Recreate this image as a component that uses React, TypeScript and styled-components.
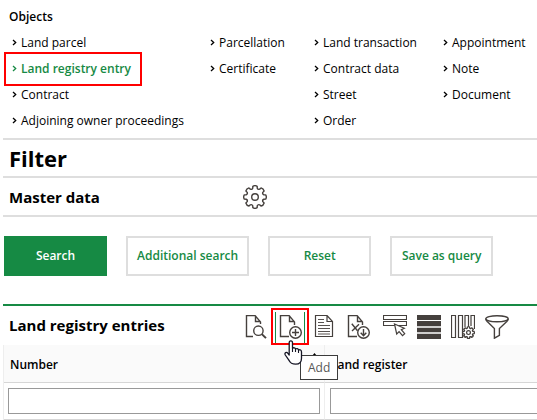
import React from "react";
import styled, { createGlobalStyle, css } from "styled-components";

const GREEN = "#168a44";
const LINE = "#dedede";
const INK = "#45403d";

const GlobalStyle = createGlobalStyle`
  *, *::before, *::after { box-sizing: border-box; }
  body {
    margin: 0;
    background: #fff;
    color: #000;
    font: 12px/26px "Open Sans", "Noto Sans", sans-serif;
    overflow: hidden;
  }
`;

const Page = styled.main`
  padding-left: 3px;
`;

const callout = css`
  position: relative;
  &::after {
    content: "";
    position: absolute;
    border: 2px solid #f00;
    pointer-events: none;
  }
`;

const Objects = styled.nav`
  padding: 4px 0 4px 6px;
  border-bottom: 2px solid ${LINE};
`;

const ObjectsTitle = styled.h2`
  margin: 0;
  font-size: 12px;
  font-weight: 600;
`;

const LinkColumns = styled.div`
  display: grid;
  grid-template-columns: 198px 104px 129px 1fr;
  padding-left: 3px;
`;

const LinkList = styled.ul`
  margin: 0;
  padding: 0;
  list-style: none;
`;

const ObjectLink = styled.a<{ $current?: boolean }>`
  display: inline-flex;
  align-items: center;
  gap: 4px;
  height: 26px;
  vertical-align: top;
  color: #000;
  white-space: nowrap;
  text-decoration: none;
  ${(p) =>
    p.$current &&
    css`
      ${callout}
      color: ${GREEN};
      font-weight: 600;
      &::after { inset: -4px -11px -4px -8px; }
    `}
`;

const FilterTitle = styled.h1`
  margin: 0;
  padding-left: 6px;
  border-bottom: 2px solid ${LINE};
  font-size: 22px;
  line-height: 36px;
`;

const SectionTitle = styled.h2`
  flex: 0 0 234px;
  margin: 0;
  font-size: 15px;
  line-height: 24px;
  white-space: nowrap;
`;

const MasterBar = styled.section`
  display: flex;
  align-items: center;
  height: 39px;
  padding: 0 0 0 6px;
  border-bottom: 2px solid ${LINE};
`;

const IconButton = styled.button<{ $active?: boolean }>`
  display: flex;
  width: 24px;
  height: 24px;
  padding: 0;
  border: 0;
  background: none;
  ${(p) =>
    p.$active &&
    css`
      ${callout}
      &::before {
        content: "";
        position: absolute;
        inset: -3px -2px -4px -4px;
        border: solid ${GREEN};
        border-width: 0 1px;
      }
      &::after { inset: -7px -6px -6px -8px; }
    `}
`;

const Actions = styled.div`
  display: flex;
  gap: 19px;
  padding: 19px 0 28px 1px;
`;

const ActionButton = styled.button<{ $primary?: boolean }>`
  min-width: 103px;
  height: 40px;
  padding: 0 9px;
  border: 2px solid ${(p) => (p.$primary ? GREEN : LINE)};
  background: ${(p) => (p.$primary ? GREEN : "#fff")};
  color: ${(p) => (p.$primary ? "#fff" : GREEN)};
  font: inherit;
  font-weight: 600;
  white-space: nowrap;
`;

const EntriesBar = styled.header`
  display: flex;
  align-items: center;
  height: 41px;
  padding: 0 0 2px 6px;
  border-top: 2px solid ${GREEN};
`;

const Tools = styled.div`
  display: flex;
  padding: 4px 0 0 2px;
`;

const ToolGroup = styled.div`
  display: flex;
  gap: 10px;
  & + & { margin-left: 12px; }
`;

const TableScroller = styled.div`
  overflow: hidden;
`;

const EntryTable = styled.table`
  width: 120%;
  table-layout: fixed;
  border-spacing: 0;
  border-left: 1px solid #eee;

  th, td {
    padding: 0 4px;
    border-right: 1px solid #eee;
    border-bottom: 1px solid #d6d6d6;
  }
  th {
    height: 38px;
    background: #fafafa;
    font-weight: 600;
    text-align: left;
  }
  td { height: 37px; }
  td + td { padding-left: 5px; }
  th:first-child { width: 321px; }
`;

const HeadLabel = styled.div`
  display: flex;
  justify-content: space-between;
  align-items: center;
  padding: 2px 3px 0 2px;
`;

const FilterInput = styled.input`
  display: block;
  width: 100%;
  height: 26px;
  border: 1px solid #999;
  background: #fff;
  font: inherit;
`;

const HoverLayer = styled.div`
  position: absolute;
  top: 25px;
  left: 5px;
  z-index: 1;
  width: 19px;
  height: 25px;
`;

const Tooltip = styled.span`
  position: absolute;
  top: 15px;
  left: 16px;
  padding: 0 7px;
  border: 1px solid #3c3c3c;
  background: #fff;
  color: #575757;
  font: 12px/23px "Open Sans", sans-serif;
`;

const Svg = ({ children, size = 24 }: { children: React.ReactNode; size?: number }) => (
  <svg width={size} height={size} viewBox="0 0 24 24" fill="none" stroke={INK} strokeWidth="1.4" aria-hidden="true">
    {children}
  </svg>
);

const Chevron = () => (
  <svg width="5" height="8" viewBox="0 0 5 8" fill="none" stroke="currentColor" strokeWidth="1.3" aria-hidden="true">
    <path d="M1 1l2.7 2.5L1 6" />
  </svg>
);

const gearPath = (cx: number, cy: number, r: number) => {
  const n = 8;
  const pt = (rad: number, a: number) =>
    `${(cx + rad * Math.cos(a)).toFixed(2)} ${(cy + rad * Math.sin(a)).toFixed(2)}`;
  let d = "";
  for (let i = 0; i < n; i++) {
    const a = (i * 2 * Math.PI) / n - Math.PI / 2;
    d += `${i ? "L" : "M"}${pt(r * 0.79, a - 0.25)}L${pt(r * 0.95, a - 0.2)}Q${pt(r * 1.04, a)} ${pt(r * 0.95, a + 0.2)}L${pt(r * 0.79, a + 0.25)}`;
    d += `Q${pt(r * 0.67, a + Math.PI / n)} ${pt(r * 0.79, a + (2 * Math.PI) / n - 0.25)}`;
  }
  return d + "Z";
};

const GearIcon = () => (
  <Svg>
    <path d={gearPath(12, 12, 11.5)} strokeLinejoin="round" />
    <circle cx="12" cy="12" r="3.3" />
  </Svg>
);

const SearchDocIcon = () => (
  <Svg>
    <path d="M8 21.5H1.5v-21H10l5.5 6.4v2M10.5.5v6h5" />
    <circle cx="13.4" cy="15.7" r="4.7" />
    <path d="M16.8 19.1l4.2 4" strokeWidth="2" />
  </Svg>
);

const AddDocIcon = () => (
  <Svg>
    <path d="M10 21.5H1.5v-21H10l5.5 6.4v3M10.5.5v6h5" />
    <circle cx="16.5" cy="17.5" r="5.8" />
    <path d="M16.5 14v7M13 17.5h7" />
  </Svg>
);

const TextDocIcon = () => (
  <Svg>
    <path d="M2.5.5H14l5.5 6v15h-17zM14 .5v6h5.5" strokeWidth="1.2" />
    <path d="M5 4.5h6M5 7.5h6M5 10.5h12M5 13.5h12M5 16.5h12M5 19h12" strokeWidth=".9" />
  </Svg>
);

const ExportIcon = () => (
  <Svg>
    <path d="M10 21.5H1.5v-21H10l5.5 6.4v3M10.5.5v6h5" />
    <path d="M4.8 8.7l5.7 7M12 9.3L5 16" />
    <circle cx="16.5" cy="17.5" r="5.8" />
    <path d="M16.5 14v6.5M13.7 17.7l2.8 3 2.8-3" />
  </Svg>
);

const SelectRowsIcon = () => (
  <Svg>
    <path d="M.5.5h23v4H.5zM.5 6.5h23v4H.5z" strokeWidth="1.1" />
    <path d="M11.5 9l2.2 10 2.4-2.4 3.4 4 2.2-2-3.4-3.9 3-1.5z" fill="#fff" strokeWidth="1.2" />
  </Svg>
);

const RowsIcon = () => (
  <Svg>
    <path d="M0 0h24v5H0zM0 6h24v5.3H0zM0 12.7h24v4.6H0zM0 18.7h24V24H0z" fill={INK} stroke="none" />
  </Svg>
);

const ColumnsIcon = () => (
  <Svg>
    <path d="M.5.5h4v22h-4zM7.5.5h4v22h-4zM14 12V.5h3.5V11M20 11V.5h3.5V14" strokeWidth="1.2" />
    <path d={gearPath(17.5, 17.6, 6)} fill="#fff" strokeWidth="1.3" />
    <circle cx="17.5" cy="17.6" r="1.9" strokeWidth="1.2" />
  </Svg>
);

const FunnelIcon = () => (
  <Svg>
    <ellipse cx="12" cy="3.8" rx="11.2" ry="3" />
    <path d="M.8 3.8c0 1.8 1 2.3 2.2 3.5l6.4 6.3v9.6l5-2.8v-6.8L21 7.3c1.2-1.2 2.2-1.7 2.2-3.5" />
  </Svg>
);

const HandCursor = () => (
  <svg width="19" height="25" viewBox="0 0 19 25" fill="#fff" stroke="#161625" strokeWidth="1.3" strokeLinejoin="round" aria-hidden="true">
    <path d="M5.2 15V2.8c0-2.6 3.3-2.6 3.3 0v5.5c1-1 2.8-.6 3 .7 1.2-.8 2.8-.3 3 1 1.5-.7 3 .2 3 2v6.2c0 3.6-2.2 5.9-5.8 5.9-4 0-5.3-1-7-4.2L1.3 15c-1.2-2.4 1.3-3.3 2.6-1.7z" />
    <path d="M8.5 8v4M11.5 9v3M14.5 10v3" strokeWidth="1.1" />
  </svg>
);

const SortIcon = () => (
  <svg width="5" height="26" viewBox="0 0 5 26" aria-hidden="true">
    <path d="M2.5 1L5 4H0z" />
  </svg>
);

const columns = [
  ["Land parcel", "Land registry entry", "Contract", "Adjoining owner proceedings"],
  ["Parcellation", "Certificate"],
  ["Land transaction", "Contract data", "Street", "Order"],
  ["Appointment", "Note", "Document"],
];

export default function App() {
  return (
    <>
      <GlobalStyle />
      <Page>
        <Objects aria-label="Objects">
          <ObjectsTitle>Objects</ObjectsTitle>
          <LinkColumns>
            {columns.map((items) => (
              <LinkList key={items[0]}>
                {items.map((item) => (
                  <li key={item}>
                    <ObjectLink href="#" $current={item === "Land registry entry"}>
                      <Chevron />
                      {item}
                    </ObjectLink>
                  </li>
                ))}
              </LinkList>
            ))}
          </LinkColumns>
        </Objects>
        <FilterTitle>Filter</FilterTitle>
        <MasterBar>
          <SectionTitle>Master data</SectionTitle>
          <IconButton aria-label="Settings"><GearIcon /></IconButton>
        </MasterBar>
        <Actions>
          <ActionButton $primary>Search</ActionButton>
          <ActionButton>Additional search</ActionButton>
          <ActionButton>Reset</ActionButton>
          <ActionButton>Save as query</ActionButton>
        </Actions>
        <EntriesBar>
          <SectionTitle>Land registry entries</SectionTitle>
          <Tools role="toolbar">
            <ToolGroup>
              <IconButton aria-label="View"><SearchDocIcon /></IconButton>
              <IconButton $active aria-label="Add">
                <AddDocIcon />
                <HoverLayer>
                  <Tooltip role="tooltip">Add</Tooltip>
                </HoverLayer>
                <HoverLayer><HandCursor /></HoverLayer>
              </IconButton>
              <IconButton aria-label="Report"><TextDocIcon /></IconButton>
              <IconButton aria-label="Export"><ExportIcon /></IconButton>
            </ToolGroup>
            <ToolGroup>
              <IconButton aria-label="Select rows"><SelectRowsIcon /></IconButton>
              <IconButton aria-label="Rows"><RowsIcon /></IconButton>
              <IconButton aria-label="Configure columns"><ColumnsIcon /></IconButton>
              <IconButton aria-label="Filter"><FunnelIcon /></IconButton>
            </ToolGroup>
          </Tools>
        </EntriesBar>
        <TableScroller>
          <EntryTable>
            <thead>
              <tr>
                <th scope="col"><HeadLabel>Number<SortIcon /></HeadLabel></th>
                <th scope="col"><HeadLabel>Land register</HeadLabel></th>
              </tr>
            </thead>
            <tbody>
              <tr>
                <td><FilterInput aria-label="Number" /></td>
                <td><FilterInput aria-label="Land register" /></td>
              </tr>
            </tbody>
          </EntryTable>
        </TableScroller>
      </Page>
    </>
  );
}
